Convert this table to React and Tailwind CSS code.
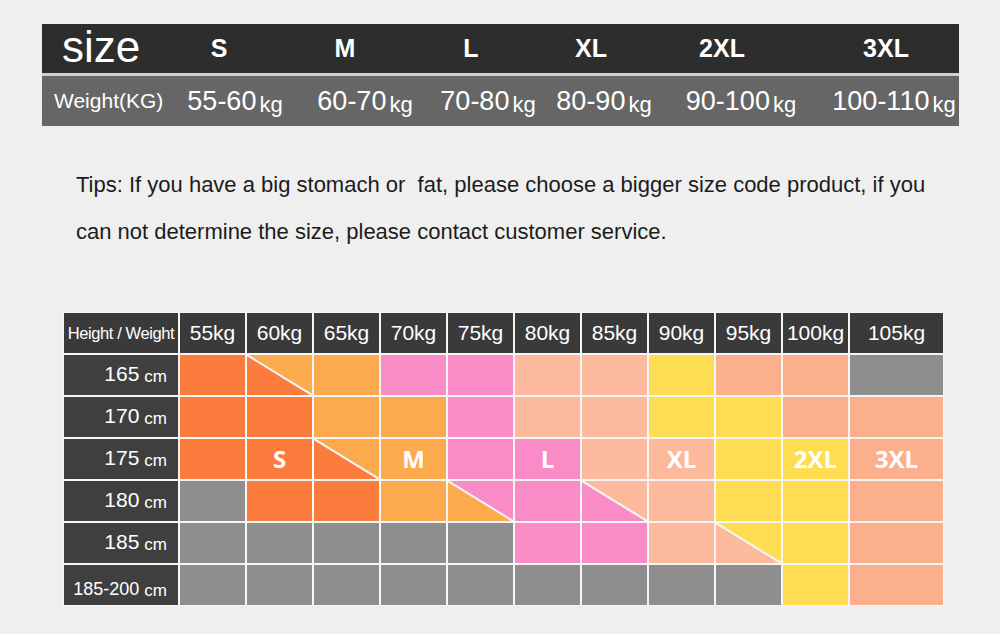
import React from 'react'

const FONT = { fontFamily: '"Liberation Sans", Arial, sans-serif' }

const BG = {
  s: 'bg-[#fb7c3c]',
  m: 'bg-[#fcaa4e]',
  l: 'bg-[#f98bc6]',
  xl: 'bg-[#fdb99b]',
  x2: 'bg-[#fedd53]',
  x3: 'bg-[#fcaf8d]',
  g: 'bg-[#8e8e8e]',
}

const HEX = {
  s: '#fb7c3c',
  m: '#fcaa4e',
  l: '#f98bc6',
  xl: '#fdb99b',
  x2: '#fedd53',
  x3: '#fcaf8d',
}

const weights = ['55kg', '60kg', '65kg', '70kg', '75kg', '80kg', '85kg', '90kg', '95kg', '100kg', '105kg']

// a pair means the cell is split corner to corner: [lower-left, upper-right]
const rows = [
  { h: '165', cells: ['s', ['s', 'm'], 'm', 'l', 'l', 'xl', 'xl', 'x2', 'x3', 'x3', 'g'] },
  { h: '170', cells: ['s', 's', 'm', 'm', 'l', 'xl', 'xl', 'x2', 'x2', 'x3', 'x3'] },
  {
    h: '175',
    cells: ['s', 's', ['s', 'm'], 'm', 'l', 'l', 'xl', 'xl', 'x2', 'x2', 'x3'],
    marks: { 1: 'S', 3: 'M', 5: 'L', 7: 'XL', 9: '2XL', 10: '3XL' },
  },
  { h: '180', cells: ['g', 's', 's', 'm', ['m', 'l'], 'l', ['l', 'xl'], 'xl', 'x2', 'x2', 'x3'] },
  { h: '185', cells: ['g', 'g', 'g', 'g', 'g', 'l', 'l', 'xl', ['xl', 'x2'], 'x2', 'x3'] },
  { h: '185-200', small: true, cells: ['g', 'g', 'g', 'g', 'g', 'g', 'g', 'g', 'g', 'x2', 'x3'] },
]

function Kg({ v }) {
  return (
    <span className="whitespace-nowrap">
      <span className="text-[27px]">{v}</span>
      <span className="text-[22px] ml-[3px] relative top-[2px]">kg</span>
    </span>
  )
}

function Cell({ c, mark }) {
  if (Array.isArray(c)) {
    return (
      <div className="h-[40px]">
        <svg width="100%" height="40" viewBox="0 0 65 40" preserveAspectRatio="none" className="block">
          <rect width="65" height="40" fill={HEX[c[1]]} />
          <polygon points="0,0 0,40 65,40" fill={HEX[c[0]]} />
          <line x1="0" y1="0" x2="65" y2="40" stroke="#f6f6f6" strokeWidth="2" />
        </svg>
      </div>
    )
  }
  return (
    <div className={`h-[40px] flex items-center justify-center ${BG[c]}`}>
      {mark && (
        <span className="text-white font-bold text-[24px]" style={{ fontFamily: '"Open Sans", sans-serif' }}>
          {mark}
        </span>
      )}
    </div>
  )
}

export default function App() {
  return (
    <div className="w-[1000px] h-[634px] bg-[#efefef] overflow-hidden pt-[24px]" style={FONT}>
      {/* size / weight strip */}
      <div className="ml-[42px] w-[917px] text-white">
        <div className="h-[49px] bg-[#2d2d2d] flex items-center">
          <div className="w-[114px] pl-[20px] text-[44px] leading-[44px] mb-[4px]">size</div>
          {[
            ['S', 'w-[126px]'],
            ['M', 'w-[126px]'],
            ['L', 'w-[126px]'],
            ['XL', 'w-[114px]'],
            ['2XL', 'w-[148px]'],
          ].map(([t, w]) => (
            <div key={t} className={`${w} text-center font-bold text-[25px]`}>{t}</div>
          ))}
          <div className="w-[163px] pl-[17px] text-center font-bold text-[25px]">3XL</div>
        </div>
        <div className="h-[3px] bg-[#cfcfcf]" />
        <div className="h-[50px] bg-[#666666] flex items-center whitespace-nowrap overflow-hidden">
          <div className="w-[128px] shrink-0 pl-[12px] text-[21px]">Weight(KG)</div>
          <div className="w-[130px] shrink-0 text-center"><Kg v="55-60" /></div>
          <div className="w-[130px] shrink-0 text-center"><Kg v="60-70" /></div>
          <div className="w-[116px] shrink-0 text-center"><Kg v="70-80" /></div>
          <div className="w-[116px] shrink-0 text-center"><Kg v="80-90" /></div>
          <div className="w-[158px] shrink-0 text-center"><Kg v="90-100" /></div>
          <div className="w-[139px] shrink-0 pl-[9px] text-center"><Kg v="100-110" /></div>
        </div>
      </div>

      {/* tips */}
      <div className="mt-[35px] ml-[76px] text-[22px] leading-[47px] text-[#1c1c1c] whitespace-nowrap">
        <div>Tips: If you have a big stomach or{'\u00a0'} fat, please choose a bigger size code product, if you</div>
        <div>can not determine the size, please contact customer service.</div>
      </div>

      {/* height / weight chart */}
      <div className="mt-[57px] ml-[63px] w-fit bg-[#f6f6f6] p-[1px] grid grid-cols-[114px_repeat(10,65px)_93px] gap-[2px]">
        <div className="h-[40px] bg-[#3a3a3a] text-white text-[16.5px] flex items-center justify-center tracking-[-0.4px] whitespace-nowrap">
          Height / Weight
        </div>
        {weights.map((w) => (
          <div key={w} className="h-[40px] bg-[#3a3a3a] text-white text-[21px] flex items-center justify-center">
            {w}
          </div>
        ))}
        {rows.map((r) => (
          <React.Fragment key={r.h}>
            <div
              className={`h-[40px] bg-[#3f3f3f] text-white flex items-end justify-end pr-[11px] ${r.small ? 'pb-[2px]' : 'pb-[6px]'}`}
            >
              <span className={r.small ? 'text-[18px]' : 'text-[21px]'}>{r.h}</span>
              <span className="text-[17px] ml-[5px]">cm</span>
            </div>
            {r.cells.map((c, i) => (
              <Cell key={i} c={c} mark={r.marks && r.marks[i]} />
            ))}
          </React.Fragment>
        ))}
      </div>
    </div>
  )
}
